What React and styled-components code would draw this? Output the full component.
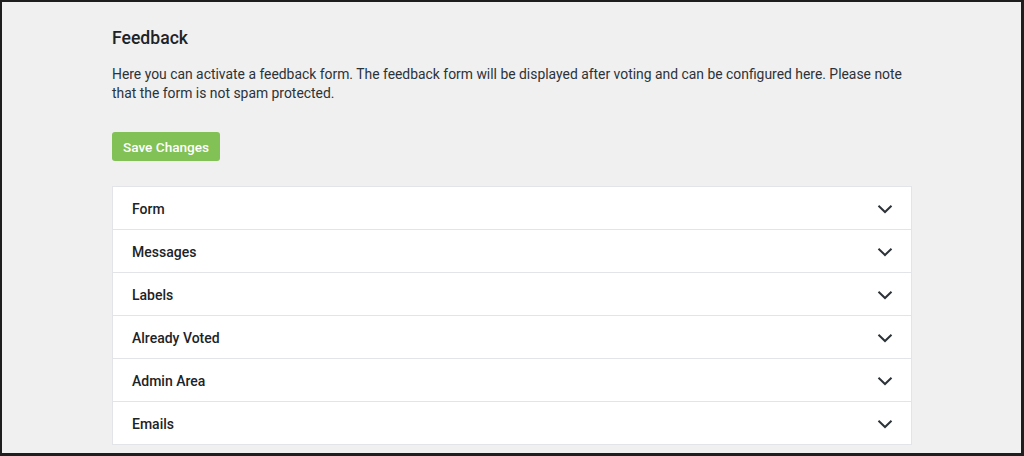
import React from "react";
import styled, { createGlobalStyle } from "styled-components";

const Global = createGlobalStyle`
  html, body { margin: 0; padding: 0; }
  body {
    background: #f0f0f1;
    font-family: Roboto, "Noto Sans", "Liberation Sans", sans-serif;
    color: #1d2327;
  }
`;

const Frame = styled.div`
  box-sizing: border-box;
  width: 1024px;
  height: 456px;
  border: 2px solid #1e1e1e;
  border-right-width: 3px;
  border-bottom-width: 3px;
  background: #f0f0f1;
  overflow: hidden;
`;

const Content = styled.div`
  width: 800px;
  margin-left: 110px;
  padding-top: 25px;
`;

const Title = styled.h2`
  margin: 0;
  font-size: 17.6px;
  font-weight: 500;
  line-height: 22px;
  color: #1d2327;
`;

const Intro = styled.p`
  margin: 16px 0 0;
  font-size: 13.9px;
  line-height: 19px;
  color: #2c3338;
`;

const SaveButton = styled.button`
  margin-top: 29px;
  height: 29px;
  padding: 0 11px;
  border: none;
  border-radius: 3px;
  background: #81c156;
  color: #fff;
  font-family: inherit;
  font-size: 13.6px;
  font-weight: 500;
  cursor: pointer;
`;

const Panel = styled.div`
  margin-top: 25px;
  background: #fff;
  border: 1px solid #e2e4e7;
`;

const Row = styled.div`
  display: flex;
  align-items: center;
  justify-content: space-between;
  box-sizing: border-box;
  height: ${(p) => (p.$first ? "42px" : "43px")};
  padding: 1px 18px 0 19px;
  border-top: ${(p) => (p.$first ? "none" : "1px solid #e2e4e7")};
`;

const RowLabel = styled.span`
  font-size: 14px;
  font-weight: 500;
  color: #1d2327;
`;

const Chevron = () => (
  <svg width="16" height="10" viewBox="0 0 16 10" fill="none">
    <path d="M1.5 1.8 L8 8 L14.5 1.8" stroke="#2c3338" strokeWidth="2" />
  </svg>
);

const sections = ["Form", "Messages", "Labels", "Already Voted", "Admin Area", "Emails"];

export default function App() {
  return (
    <>
      <Global />
      <Frame>
        <Content>
          <Title>Feedback</Title>
          <Intro>
            Here you can activate a feedback form. The feedback form will be displayed after voting and can be configured here. Please note that the form is not spam protected.
          </Intro>
          <SaveButton>Save Changes</SaveButton>
          <Panel>
            {sections.map((s, i) => (
              <Row key={s} $first={i === 0}>
                <RowLabel>{s}</RowLabel>
                <Chevron />
              </Row>
            ))}
          </Panel>
        </Content>
      </Frame>
    </>
  );
}
